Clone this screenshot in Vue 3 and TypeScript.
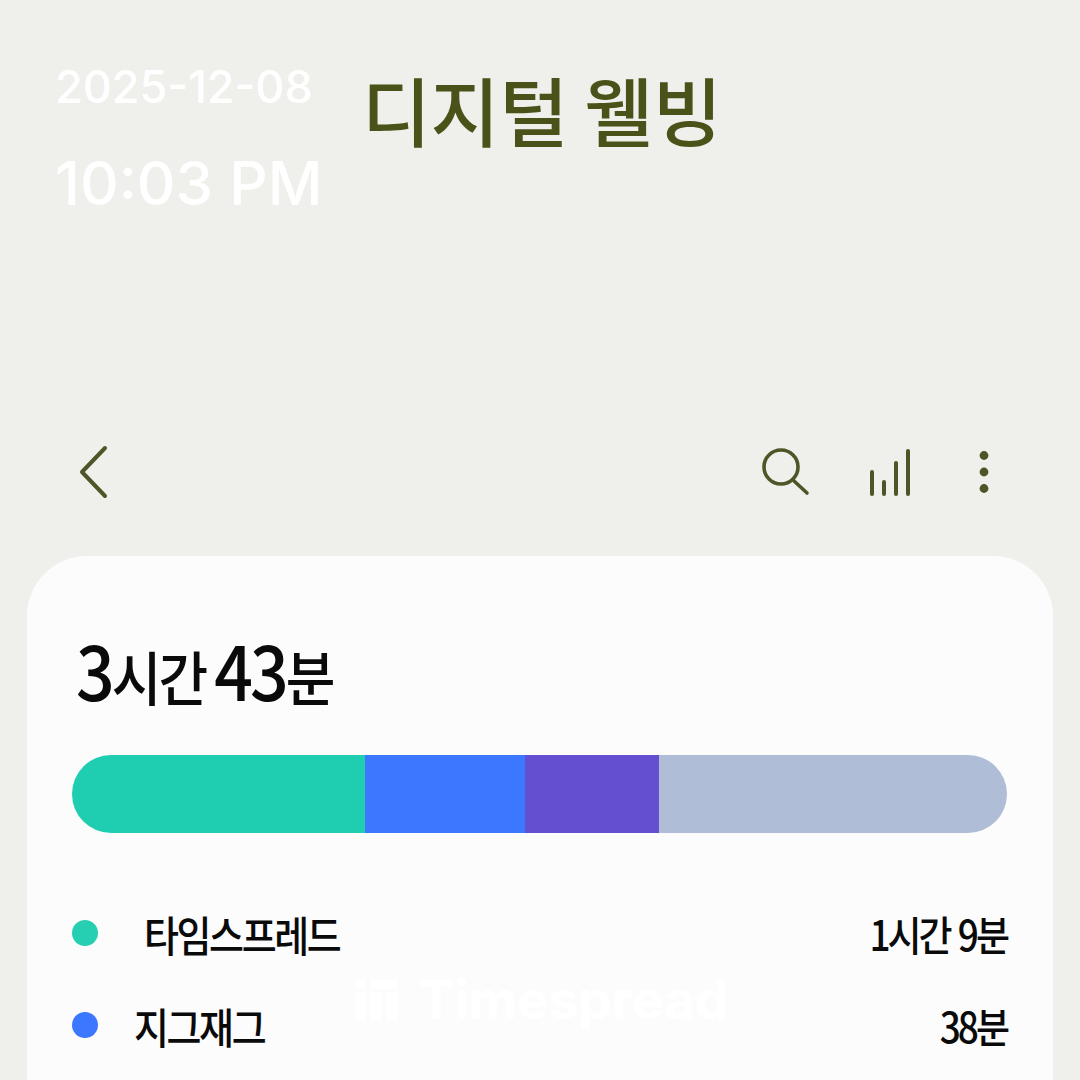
<script setup lang="ts">
interface Segment {
  color: string
  width: number
}

interface UsageRow {
  name: string
  time: string
  color: string
  indent: number
}

const segments: Segment[] = [
  { color: '#1fcdb0', width: 293 },
  { color: '#3b78ff', width: 160 },
  { color: '#634fd0', width: 134 },
  { color: '#afbdd7', width: 348 },
]

const rows: UsageRow[] = [
  { name: '타임스프레드', time: '1시간 9분', color: '#27cfb2', indent: 46 },
  { name: '지그재그', time: '38분', color: '#3b78ff', indent: 36 },
]
</script>

<template>
  <div class="page">
    <div class="stamp">
      <div class="stamp-date">2025-12-08</div>
      <div class="stamp-time">10:03 PM</div>
    </div>

    <h1 class="title">디지털 웰빙</h1>

    <div class="toolbar">
      <svg class="icon-back" width="32" height="56" viewBox="0 0 32 56">
        <path d="M27 4 L4 28 L27 52" fill="none" stroke="#4e5527" stroke-width="4" stroke-linecap="round" stroke-linejoin="round" />
      </svg>
      <div class="actions">
        <svg width="50" height="50" viewBox="0 0 50 50">
          <circle cx="20" cy="20" r="17" fill="none" stroke="#4e5527" stroke-width="3.6" />
          <path d="M32 33 L46 46" fill="none" stroke="#4e5527" stroke-width="3.6" stroke-linecap="round" />
        </svg>
        <svg width="44" height="50" viewBox="0 0 44 50">
          <g fill="none" stroke="#4e5527" stroke-width="4" stroke-linecap="round">
            <path d="M3 25 V47" />
            <path d="M15 35 V47" />
            <path d="M27 16 V47" />
            <path d="M39 4 V47" />
          </g>
        </svg>
        <svg class="icon-more" width="12" height="46" viewBox="0 0 12 46">
          <g fill="#4e5527">
            <circle cx="6" cy="6.5" r="4.4" />
            <circle cx="6" cy="23" r="4.4" />
            <circle cx="6" cy="39.5" r="4.4" />
          </g>
        </svg>
      </div>
    </div>

    <section class="card">
      <div class="total">
        <span class="total-num">3</span>시간 <span class="total-num">43</span>분
      </div>

      <div class="bar">
        <div
          v-for="seg in segments"
          :key="seg.color"
          class="bar-seg"
          :style="{ width: seg.width + 'px', background: seg.color }"
        ></div>
      </div>

      <ul class="rows">
        <li v-for="row in rows" :key="row.name" class="row">
          <span class="dot" :style="{ background: row.color }"></span>
          <span class="row-name" :style="{ marginLeft: row.indent + 'px' }">{{ row.name }}</span>
          <span class="row-time">{{ row.time }}</span>
        </li>
      </ul>
    </section>

    <div class="watermark">
      <svg width="44" height="40" viewBox="0 0 44 40">
        <g fill="#fff">
          <rect x="1" y="0" width="10" height="9" />
          <rect x="1" y="12" width="10" height="28" />
          <rect x="15" y="0" width="28" height="9" />
          <rect x="15" y="12" width="12" height="28" />
          <rect x="31" y="12" width="12" height="28" />
        </g>
      </svg>
      <span>Timespread</span>
    </div>
  </div>
</template>

<style>
html,
body {
  margin: 0;
  background: #eff0eb;
}
</style>

<style scoped>
.page {
  position: relative;
  width: 1080px;
  height: 1080px;
  overflow: hidden;
  background: #eff0eb;
  font-family: "Noto Sans CJK KR", "Noto Sans", sans-serif;
  display: flex;
  flex-direction: column;
}
.stamp {
  position: absolute;
  left: 55px;
  top: 60px;
  color: #fff;
  font-family: Inter, "Liberation Sans", sans-serif;
  font-weight: 500;
}
.stamp-date {
  font-size: 45px;
  line-height: 54px;
}
.stamp-time {
  font-size: 60px;
  line-height: 70px;
  margin-top: 34px;
}
.title {
  margin: 60px 0 0 362px;
  height: 98px;
  font-size: 75px;
  line-height: 98px;
  font-weight: 500;
  color: #4b5219;
  letter-spacing: -0.4px;
  white-space: nowrap;
}
.toolbar {
  margin-top: 284px;
  height: 60px;
  padding: 0 90px 0 78px;
  display: flex;
  align-items: center;
  justify-content: space-between;
}
.actions {
  display: flex;
  align-items: center;
  gap: 58px;
}
.icon-more {
  margin-left: 7px;
}
.card {
  margin: 54px 27px 0;
  flex: 1;
  padding: 66px 46px 0 45px;
  background: #fcfcfc;
  border-radius: 60px 60px 0 0;
}
.total {
  height: 100px;
  margin-bottom: 33px;
  margin-left: 4px;
  font-size: 54px;
  line-height: 100px;
  font-weight: 500;
  color: #0a0a0a;
  letter-spacing: -3px;
  white-space: nowrap;
  transform: scaleY(1.1);
  transform-origin: 0 75%;
}
.total-num {
  font-size: 68px;
}
.bar {
  height: 78px;
  width: 935px;
  display: flex;
  border-radius: 39px;
  overflow: hidden;
}
.bar-seg {
  height: 100%;
}
.rows {
  list-style: none;
  margin: 54px 0 0;
  padding: 0;
}
.row {
  height: 92px;
  display: flex;
  align-items: center;
  font-size: 38px;
  font-weight: 500;
  color: #0a0a0a;
  letter-spacing: -2.4px;
}
.row-name,
.row-time {
  transform: scaleY(1.12);
}
.dot {
  width: 26px;
  height: 26px;
  border-radius: 50%;
  flex: none;
}
.row-time {
  margin-left: auto;
  font-size: 37px;
  letter-spacing: -3px;
  word-spacing: 3px;
}
.watermark {
  position: absolute;
  left: 355px;
  top: 975px;
  display: flex;
  align-items: center;
  gap: 20px;
  color: #fff;
  font-family: Inter, "Liberation Sans", sans-serif;
  font-size: 53px;
  line-height: 50px;
  font-weight: 700;
}
</style>
